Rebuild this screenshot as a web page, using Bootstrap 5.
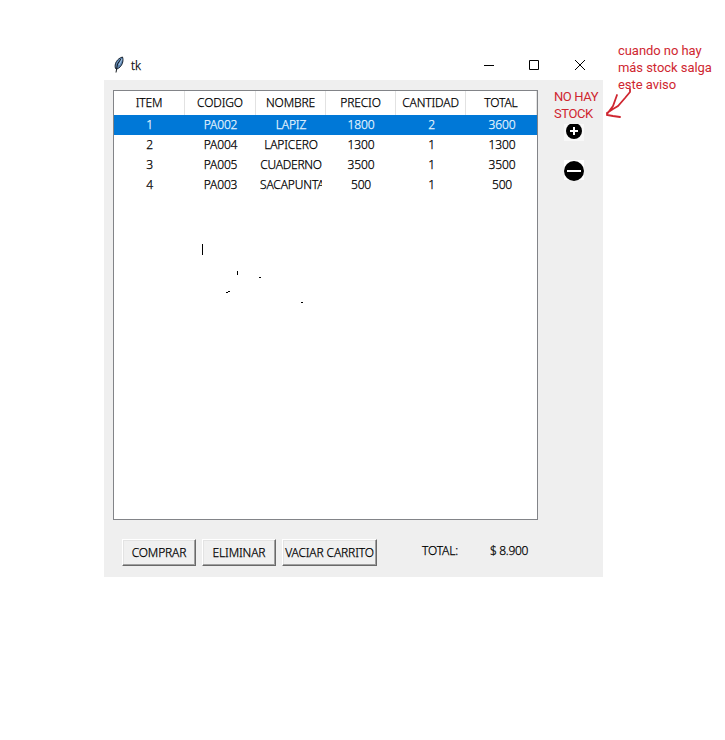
<!DOCTYPE html>
<html lang="es">
<head>
<meta charset="utf-8">
<meta name="viewport" content="width=device-width, initial-scale=1">
<title>tk</title>
<link href="https://cdn.jsdelivr.net/npm/bootstrap@5.3.0/dist/css/bootstrap.min.css" rel="stylesheet">
<style>
body{width:725px;height:740px;overflow:hidden;background:#fff;color:#000;font:350 12px/20px "Noto Sans","Open Sans",sans-serif;letter-spacing:-.14px}
.win{-webkit-text-stroke:.25px}
.stage{padding:49px 0 0 104px}
.win{width:499px;height:528px}
.titlebar{height:31px;padding:0 17px 0 8px}
.caption{margin:2px 0 0 5px}
.client{height:497px;background:#efefef;padding:10px 0 0 9px}
.tree{width:425px;height:430px;border:1px solid #828488;background:#fff}
.tree-row{display:grid;grid-template-columns:70px 72px 69px 71px 70px 71px;height:20px;text-align:center}
.tree-row>span{overflow:hidden;white-space:nowrap;margin:0 3px 0 4px}
.tree-row>.tight{letter-spacing:-.25px}
.tree-head{height:24px;line-height:24px;grid-template-columns:71px 71px 70px 70px 70px 71px}
.tree-head>span{margin:0;border-right:1px solid #e2e2e2}
.picked{background:#0078d7;color:#e6f5ff}
.side{width:65px;padding-left:16px}
.side .note{margin-top:-2px;margin-bottom:2px;letter-spacing:-.4px}
.note{font-family:Roboto,sans-serif;font-weight:400;color:#cf2630;font-size:13px;line-height:17px;white-space:nowrap;-webkit-text-stroke:0}
.tk-btn{height:27px;padding:0;border:1px solid;border-color:#fff #696969 #696969 #fff;box-shadow:inset -1px -1px #a0a0a0,inset 1px 1px #e3e3e3;background:#f0f0f0;color:#000;font:inherit;letter-spacing:inherit;line-height:26px;overflow:hidden;white-space:nowrap;display:flex;justify-content:center}
.foot{padding:19px 0 0 9px;gap:6px}
.w-a{width:74px}.w-b{width:95px}
.remark{margin-top:-7px;padding-left:15px;letter-spacing:-.05px}
.ink{position:absolute;left:0;top:0;pointer-events:none}
.sums{margin:-4px 0 0 39px;gap:32px}
.amount{letter-spacing:-.35px}
</style>
</head>
<body>
<main class="stage d-flex position-relative">
  <section class="win flex-shrink-0">
    <header class="titlebar d-flex align-items-center">
      <svg width="14" height="18" viewBox="0 0 14 18"><path d="M3.500 12.500C2 8 5 2.500 10.500 1 12 5 10 11 5 13Z" fill="#5f87b3" stroke="#18232f"/><path d="M9 3 5.500 8 4 16.500" fill="none" stroke="#14191e"/><path d="M10 3 7 9" stroke="#a9c9e8"/></svg>
      <span class="caption">tk</span>
      <svg class="ms-auto" width="102" height="12" viewBox="0 0 102 12" fill="none" stroke="#000"><path d="M0 6.500H10M45.500 1.500h9v9h-9zM91 1l10 10M101 1 91 11"/></svg>
    </header>
    <div class="client">
      <div class="d-flex">
        <div class="tree">
          <div class="tree-row tree-head"><span>ITEM</span><span>CODIGO</span><span>NOMBRE</span><span>PRECIO</span><span>CANTIDAD</span><span>TOTAL</span></div>
          <div class="tree-row picked"><span>1</span><span>PA002</span><span>LAPIZ</span><span>1800</span><span>2</span><span>3600</span></div>
          <div class="tree-row"><span>2</span><span>PA004</span><span>LAPICERO</span><span>1300</span><span>1</span><span>1300</span></div>
          <div class="tree-row"><span>3</span><span>PA005</span><span class="tight">CUADERNO</span><span>3500</span><span>1</span><span>3500</span></div>
          <div class="tree-row"><span>4</span><span>PA003</span><span>SACAPUNTA</span><span>500</span><span>1</span><span>500</span></div>
        </div>
        <aside class="side">
          <div class="note">NO HAY<br>STOCK</div>
          <svg width="42" height="62" viewBox="0 0 42 62"><path fill="#fff" d="M10 36h20v20H10z"/><path fill="#f8f8f8" d="M10 0h20v17H10z"/><circle cx="20" cy="7" r="8"/><path d="M16 7h8M20 3v8" stroke="#fff" stroke-width="2"/><circle cx="20" cy="47" r="10"/><path d="M13 47h14" stroke="#fff" stroke-width="2"/></svg>
        </aside>
      </div>
      <footer class="foot d-flex align-items-center">
        <button class="tk-btn w-a">COMPRAR</button><button class="tk-btn w-a">ELIMINAR</button><button class="tk-btn w-b">VACIAR CARRITO</button>
        <div class="sums d-flex"><span>TOTAL:</span><span class="amount">$ 8.900</span></div>
      </footer>
    </div>
  </section>
  <div class="note remark">cuando no hay<br>más stock salga<br>este aviso</div>
  <svg class="ink" width="725" height="740"><path d="M630 89v3l-5 6-7 8-5 3-6 4v2l6 1 7 1M617 95l-4 11-6 8" fill="none" stroke="#cf2630" stroke-width="1.8" stroke-linecap="round"/><path d="M202 244h1v11h-1zM237 271h1v4h-1zM259 277h2v1h-2zM226 292h2v-1h2v1h-2v1h-2zM301 302h2v1h-2z"/></svg>
</main>
<script src="https://cdn.jsdelivr.net/npm/bootstrap@5.3.0/dist/js/bootstrap.bundle.min.js"></script>
</body>
</html>
